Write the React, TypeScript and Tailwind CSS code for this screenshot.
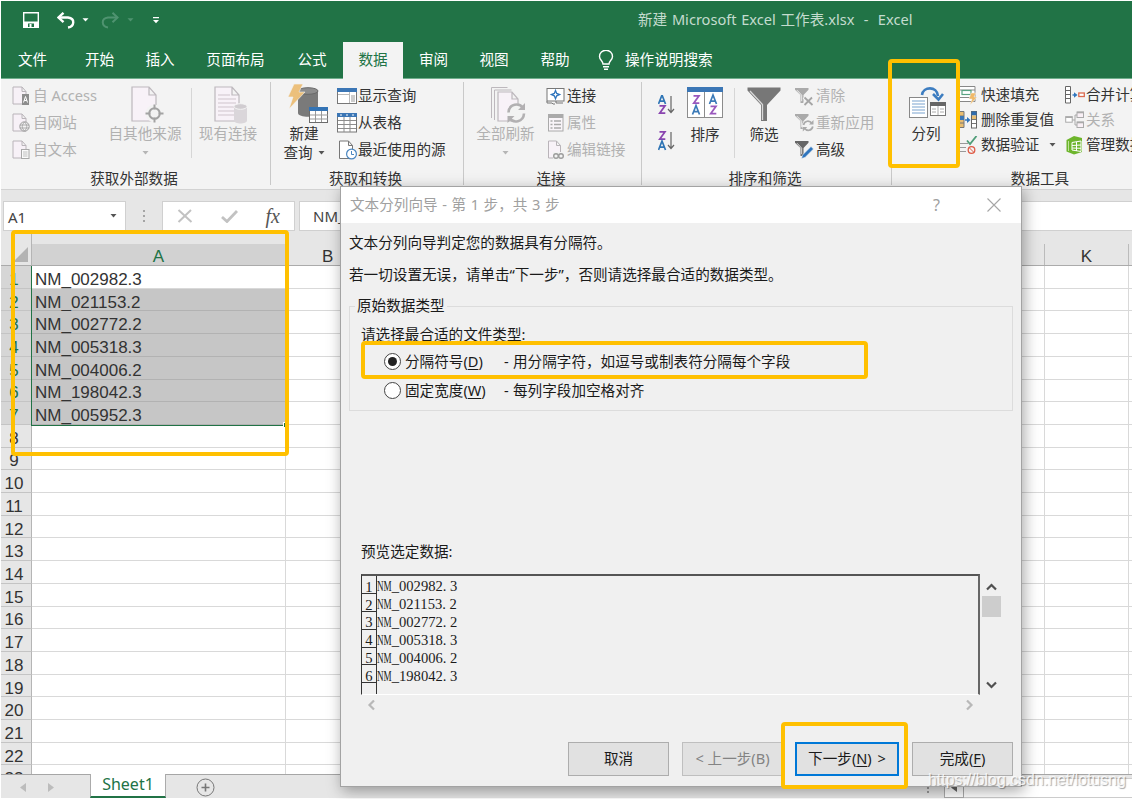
import React from "react";

const UI = "font-['Noto_Sans','Noto_Sans_CJK_SC',sans-serif]";

type IconProps = { dim?: boolean };

/* ---------- ribbon icons ---------- */

const PagePath = () => (
  <path d="M1 1h9l4 4.500v12.500h-13zM10 1v4.500h4" fill="#f7f1f7" stroke="#b9b4b9" />
);

const AccessIcon = () => (
  <svg width="18" height="20" viewBox="0 0 18 20" fill="none">
    <PagePath />
    <rect x="10" y="8" width="7" height="11" fill="#8d8d8d" />
    <path d="M11.500 16.500l2-6 2 6M12.200 14.500h2.600" stroke="#fff" />
  </svg>
);
const WebIcon = () => (
  <svg width="18" height="20" viewBox="0 0 18 20" fill="none">
    <PagePath />
    <circle cx="12.500" cy="13.500" r="4.700" fill="#f3f3f3" stroke="#9a9a9a" />
    <path d="M8 12h9M8 15h9M12.500 9c-3 3-3 6 0 9M12.500 9c3 3 3 6 0 9" stroke="#9a9a9a" strokeWidth=".8" />
  </svg>
);
const TextFileIcon = () => (
  <svg width="18" height="20" viewBox="0 0 18 20" fill="none">
    <PagePath />
    <rect x="9.500" y="9.500" width="7.500" height="9" fill="#fafafa" stroke="#a8a8a8" />
    <path d="M11 12h4.500M11 14h4.500M11 16h4.500" stroke="#b0b0b0" strokeWidth=".8" />
  </svg>
);
const OtherSourceIcon = () => (
  <svg width="34" height="38" viewBox="0 0 34 38" fill="none">
    <path d="M1 1h17l7 8v26H1zM18 1v8h7" fill="#f8f2f8" stroke="#bdb8bd" strokeWidth="1.200" />
    <circle cx="23.500" cy="27.500" r="9" fill="#f3f3f3" />
    <circle cx="23.500" cy="27.500" r="5.300" stroke="#a3a3a3" strokeWidth="2" />
    <path d="M23.500 18.500v5M23.500 31.500v5M14.500 27.500h5M27.500 27.500h5" stroke="#a3a3a3" strokeWidth="2" />
  </svg>
);
const ExistingIcon = () => (
  <svg width="34" height="38" viewBox="0 0 34 38" fill="none">
    <path d="M1 1h17l7 8v26H1zM18 1v8h7" fill="#f8f2f8" stroke="#bdb8bd" strokeWidth="1.200" />
    <path d="M4 9h12M4 13h18M4 17h18M4 21h18M4 25h16M4 29h16" stroke="#cfc4cc" />
    <path d="M20 20.500v14c0 4 13 4 13 0v-14" fill="#dad6da" />
    <ellipse cx="26.500" cy="20.500" rx="6.500" ry="2.800" fill="#d0ccd0" stroke="#f3f3f3" />
  </svg>
);
const NewQueryIcon = () => (
  <svg width="42" height="42" viewBox="0 0 42 42" fill="none">
    <path d="M10 8v22c0 5 20 5 20 0V8" fill="#7a7a7a" />
    <ellipse cx="20" cy="8" rx="10" ry="3.300" fill="#8d8d8d" stroke="#6a6a6a" />
    <path d="M6 1h9l-4 8h6L1 26l4-12H0z" fill="#ecc07c" stroke="#f3f3f3" strokeWidth=".6" />
    <rect x="21.500" y="24.500" width="18" height="15" fill="#fff" stroke="#6b6b6b" />
    <rect x="21" y="24" width="19" height="4" fill="#3474b5" />
    <path d="M22 32h18M22 36h18M27.500 28v11M33.500 28v11" stroke="#999" />
  </svg>
);
const ShowQueryIcon = () => (
  <svg width="20" height="18" viewBox="0 0 20 18" fill="none">
    <rect x=".5" y="1.500" width="19" height="15" fill="#fff" stroke="#777" />
    <rect width="20" height="4" y="1" fill="#3b76b5" />
    <path d="M1 7.500h11M12.500 5v11" stroke="#bbb" />
    <rect x="14" y="8" width="4" height="7" fill="#ccc" />
  </svg>
);
const FromTableIcon = () => (
  <svg width="20" height="20" viewBox="0 0 20 20" fill="none">
    <rect x=".5" y=".5" width="19" height="18.500" fill="#fff" stroke="#777" />
    <rect width="20" height="4" fill="#3b76b5" />
    <path d="M3 2h2M9 2h2M15 2h2" stroke="#fff" />
    <path d="M1 7.500h18M1 11.500h18M1 15.500h18M7 4v15M13 4v15" stroke="#8d8d8d" />
  </svg>
);
const RecentIcon = () => (
  <svg width="20" height="20" viewBox="0 0 20 20" fill="none">
    <path d="M2.500 1h9l4 4.500v13h-13zM11.500 1v4.500h4" fill="#fff" stroke="#777" />
    <circle cx="14.500" cy="14" r="4.900" fill="#fff" stroke="#4a86c0" strokeWidth="1.200" />
    <path d="M14.500 11v3.500h2.500" stroke="#4a86c0" />
  </svg>
);
const RefreshArrows = () => (
  <>
    <path d="M18.500 26.500c.5-9 11-10 14.500-4.500M34 27.500c-.5 9-11 10-14.500 4.500" stroke="#b2b0b2" strokeWidth="2.600" />
    <path d="M35 17v7h-7zM17.500 37v-7h7z" fill="#b2b0b2" />
  </>
);
const RefreshAllIcon = () => (
  <svg width="37" height="39" viewBox="0 0 37 39" fill="none">
    <path d="M1.500 32V1.500h16M4.500 34V4h17" stroke="#bdb8bd" />
    <path d="M8 6h14l6 7v22H8zM22 6v7h6" fill="#f8f2f8" stroke="#bdb8bd" strokeWidth="1.200" />
    <circle cx="26.500" cy="27" r="9.500" fill="#f3f3f3" />
    <RefreshArrows />
  </svg>
);
const ConnectIcon = () => (
  <svg width="19" height="18" viewBox="0 0 19 18" fill="none">
    <rect x="1" y="1.500" width="17" height="12.500" fill="#fff" stroke="#777" />
    <path d="M1 14v2h5l1 1h2M10 14v2h7" stroke="#777" />
    <path d="M9.500 3.500l1.200 2.900 2.900 1.200-2.900 1.200-1.200 2.900-1.200-2.900-2.900-1.200 2.900-1.200z" fill="#fff" stroke="#2f75bd" strokeWidth="1.300" />
  </svg>
);
const PropsIcon = () => (
  <svg width="19" height="18" viewBox="0 0 19 18" fill="none">
    <rect x="2.500" y=".5" width="14.500" height="16.500" fill="#f9f5f9" stroke="#aaa" />
    <rect x="2.500" y=".5" width="14.500" height="3.500" fill="#aaa" />
    <path d="M4.500 7h2M4.500 10.500h2M4.500 14h2M8 7h7M8 10.500h7M8 14h7" stroke="#aaa" strokeWidth="1.300" />
  </svg>
);
const EditLinkIcon = () => (
  <svg width="19" height="20" viewBox="0 0 19 20" fill="none">
    <path d="M2.500 1h8l4 4.500v12.500h-12zM10.500 1v4.500h4" fill="#f8f2f8" stroke="#b9b4b9" />
    <rect x="7" y="12" width="12" height="8" fill="#f3f3f3" />
    <circle cx="10" cy="16" r="2.300" stroke="#9d9d9d" strokeWidth="1.400" />
    <circle cx="15" cy="16" r="2.300" stroke="#9d9d9d" strokeWidth="1.400" />
  </svg>
);
const LetterA = ({ x, y, c }: { x: number; y: number; c: string }) => (
  <path transform={`translate(${x} ${y})`} d="M0 9L3.500 0 7 9M1.200 6.200h4.600" stroke={c} strokeWidth="1.700" />
);
const LetterZ = ({ x, y, c }: { x: number; y: number; c: string }) => (
  <path transform={`translate(${x} ${y})`} d="M.5.800h5.500L.7 8.200h5.600" stroke={c} strokeWidth="1.700" />
);
const SortIcon = ({ desc }: { desc?: boolean }) => (
  <svg width="17" height="20" viewBox="0 0 17 20" fill="none">
    {desc ? (
      <>
        <LetterZ x={1} y={0} c="#8a45b0" />
        <LetterA x={0.5} y={10} c="#2f75b5" />
      </>
    ) : (
      <>
        <LetterA x={0.5} y={0} c="#2f75b5" />
        <LetterZ x={1} y={10} c="#8a45b0" />
      </>
    )}
    <path d="M13 1v16.500M10 14l3 3.500 3-3.500" stroke="#666" strokeWidth="1.200" />
  </svg>
);
const SortDialogIcon = () => (
  <svg width="36" height="32" viewBox="0 0 36 32" fill="none">
    <rect x=".5" y=".5" width="35" height="30" fill="#fff" stroke="#8c8c8c" />
    <rect width="36" height="5" fill="#3b76b5" />
    <path d="M17.500 5v26" stroke="#8c8c8c" />
    <LetterZ x={6} y={8} c="#9a58bd" />
    <LetterA x={5.5} y={18.5} c="#3b7ab8" />
    <LetterA x={22.5} y={8} c="#3b7ab8" />
    <LetterZ x={23} y={18.5} c="#9a58bd" />
  </svg>
);
const FilterIcon = () => (
  <svg width="34" height="36" viewBox="0 0 34 36" fill="none">
    <path d="M.5.500h33v3L20 18v16h-6V18L.5 3.500z" fill="#777" />
    <path d="M3 4l12.500 13.500V33" stroke="#d8d8d8" strokeWidth="1.300" />
  </svg>
);
const SmallFunnel = ({ c }: { c: string }) => (
  <>
    <path d="M0 1h13.500v1.800L8.500 8v8H5.500V8L0 2.800z" fill={c} />
    <path d="M2 3.200l4.700 5v6" stroke="#fff" strokeWidth=".8" />
  </>
);
const ClearIcon = () => (
  <svg width="19" height="19" viewBox="0 0 19 19" fill="none">
    <SmallFunnel c="#aaa" />
    <path d="M9 10l9 8M17.500 10L9 18" stroke="#f3f3f3" strokeWidth="4" />
    <path d="M9.500 10.500l8 7.500M17 10.500L9.500 18" stroke="#a5a5a5" strokeWidth="1.800" />
  </svg>
);
const ReapplyIcon = () => (
  <svg width="19" height="19" viewBox="0 0 19 19" fill="none">
    <SmallFunnel c="#aaa" />
    <circle cx="13" cy="12.800" r="6" fill="#f3f3f3" />
    <path d="M8.500 12c1-4.500 6-5 8.500-1.500M17.800 13.500c-1 4.500-6 5-8.500 1.500" stroke="#aaa" strokeWidth="1.700" />
    <path d="M18.500 7v4.500H14zM7.800 18.500V14h4.500z" fill="#aaa" />
  </svg>
);
const AdvancedIcon = () => (
  <svg width="19" height="19" viewBox="0 0 19 19" fill="none">
    <SmallFunnel c="#666" />
    <path d="M6.500 18.500l1-3.500L16 6.500l2.500 2.500-8.500 8.500z" fill="#2f75bd" stroke="#f3f3f3" strokeWidth=".6" />
  </svg>
);
const SplitIcon = () => (
  <svg width="38" height="33" viewBox="0 0 38 33" fill="none">
    <rect x=".5" y="11.500" width="18" height="20" fill="#fff" stroke="#888" />
    <path d="M3 15h13M3 18h13M3 21h13M3 24h13M3 27h13" stroke="#7aa4d0" strokeWidth="1.200" />
    <rect x="21.500" y="16.500" width="15" height="13" fill="#fff" stroke="#777" />
    <rect x="21" y="16" width="16" height="4" fill="#666" />
    <path d="M29 20v9M23 23h4M23 26h4M31 23h4M31 26h4" stroke="#aaa" />
    <path d="M13 9C14 .5 28-.5 29 10" stroke="#3d7dc0" strokeWidth="2.600" />
    <path d="M24 8l5.500 5.500L34 8" stroke="#3d7dc0" strokeWidth="2.600" />
  </svg>
);
const FlashFillIcon = () => (
  <svg width="18" height="20" viewBox="0 0 18 20" fill="none">
    <path d="M-1 1.500h16v15H-1zM-1 5h16M-1 12.500h16" stroke="#888" fill="#fff" />
    <rect x="2" y="5.500" width="9" height="4" fill="#fff" stroke="#5aa382" strokeWidth="1.200" />
    <path d="M11 8h5l-2 4h3l-7 8 2-6H9z" fill="#f0ba68" stroke="#f3f3f3" strokeWidth=".5" />
  </svg>
);
const DedupeIcon = () => (
  <svg width="18" height="18" viewBox="0 0 18 18" fill="none">
    <path d="M-2 .5h6v16h-6M-2 5h6M-2 12h6" stroke="#777" fill="#e9bd70" />
    <rect x="-2" y="5" width="6" height="4" fill="#3b76b5" />
    <path d="M5 9h4" stroke="#2f75bd" strokeWidth="1.500" />
    <path d="M7 6l3.500 3L7 12z" fill="#2f75bd" />
    <rect x="11.500" y=".5" width="5" height="16.500" fill="#fff" stroke="#666" />
    <rect x="11.500" y=".5" width="5" height="4" fill="#2f6cad" />
    <rect x="12" y="4.500" width="4" height="4" fill="#e9bd70" />
    <path d="M12 8.500h4M12 12.500h4" stroke="#777" />
  </svg>
);
const ValidateIcon = () => (
  <svg width="18" height="18" viewBox="0 0 18 18" fill="none">
    <path d="M0 7.500h8M0 11.500h6M0 15.500h6" stroke="#999" />
    <path d="M7 4.500l3 3.500L16.500 0" stroke="#4f9d78" strokeWidth="1.800" />
    <circle cx="11.500" cy="14" r="3.300" stroke="#df5a45" strokeWidth="1.300" />
    <path d="M9.300 11.800l4.500 4.500" stroke="#df5a45" />
  </svg>
);
const ConsolidateIcon = () => (
  <svg width="20" height="18" viewBox="0 0 20 18" fill="none">
    <path d="M.5.500h5v16.500h-5zM1 4.500h5M1 8.500h5M1 12.500h5" stroke="#666" fill="#fff" />
    <path d="M7.500 9H10" stroke="#2f75bd" strokeWidth="1.400" />
    <path d="M9 6.200L12.500 9 9 11.800z" fill="#2f75bd" />
    <rect x="13.800" y="7" width="5.500" height="3.500" fill="#fff" stroke="#db6a4e" strokeWidth="1.300" />
  </svg>
);
const RelationIcon = () => (
  <svg width="20" height="18" viewBox="0 0 20 18" fill="none">
    <path d="M7 9h3V4h2M10 9v5h2" stroke="#aaa" />
    <rect x=".7" y="5.700" width="6.500" height="5.500" fill="#fff" stroke="#aaa" />
    <path d="M.5 6.200h7" stroke="#aaa" strokeWidth="1.600" />
    <rect x="12" y="1" width="6.500" height="5.500" fill="#f9f0f6" stroke="#aaa" />
    <path d="M12 1.500h7" stroke="#aaa" strokeWidth="1.600" />
    <rect x="12" y="11" width="6.500" height="5.500" fill="#f9f0f6" stroke="#aaa" />
    <path d="M12 11.500h7" stroke="#aaa" strokeWidth="1.600" />
  </svg>
);
const ModelIcon = () => (
  <svg width="20" height="20" viewBox="0 0 20 20" fill="none">
    <path d="M1.500 5L9 1l8 2v14l-8 2.500-7.500-3z" fill="#6db52c" />
    <path d="M7 7.500l9-1.500v10.500L7 15z" stroke="#fff" />
    <path d="M7 10.500l9-.5M7 13l9 .3M11.500 7v9" stroke="#fff" />
    <path d="M3.500 6v10" stroke="#bfe09b" />
  </svg>
);

/* ---------- ribbon building blocks ---------- */

const Caret = ({ dim }: IconProps) => (
  <svg width="7" height="4" viewBox="0 0 7 4">
    <path d="M.5 0h6l-3 3.500z" fill={dim ? "#b5b5b5" : "#555"} />
  </svg>
);

function Small({ icon, label, dim, caret }: { icon: React.ReactNode; label: string; dim?: boolean; caret?: boolean }) {
  return (
    <div className={`flex h-full items-center whitespace-nowrap ${dim ? "text-[#b1b1b1]" : "text-[#333]"}`}>
      <span className="flex w-[21px] shrink-0 items-center">{icon}</span>
      <span>{label}</span>
      {caret && <span className="ml-[10px]"><Caret /></span>}
    </div>
  );
}

function Big({ icon, label, second, dim, width, caret }: {
  icon: React.ReactNode; label: string; second?: string; dim?: boolean; width: string; caret?: boolean;
}) {
  return (
    <div className={`flex ${width} shrink-0 flex-col items-center whitespace-nowrap leading-[19px] ${dim ? "text-[#b1b1b1]" : "text-[#333]"}`}>
      <div className="flex h-[38px] items-start justify-center">{icon}</div>
      <div>{label}</div>
      {second && <div className="flex items-center gap-[5px]">{second}<Caret /></div>}
      {caret && <div className="mt-[8px]"><Caret dim /></div>}
    </div>
  );
}

function Group({ label, width, children }: { label: string; width: string; children: React.ReactNode }) {
  return (
    <section className={`flex ${width} shrink-0 flex-col`}>
      <div className="flex h-[88px] pt-[4px]">{children}</div>
      <div className="flex h-[22px] items-center justify-center pr-[3px] pt-[2px] text-[#333]">{label}</div>
    </section>
  );
}

const Divider = () => <div className="mt-[3px] h-[103px] w-px shrink-0 bg-[#c9c9c9]" />;
const Rule = () => <div className="mt-[5px] h-[70px] w-px shrink-0 bg-[#d6d6d6]" />;

function Ribbon() {
  return (
    <div className="flex h-[112px] shrink-0 overflow-hidden border-b border-[#d2d2d2] border-t border-t-[#6fae8c] bg-[#f3f3f3] text-[14.600px]">
      <Group label="获取外部数据" width="w-[269px]">
        <div className="grid h-[80px] w-[98px] grid-rows-3 pl-[11px]">
          <Small dim icon={<AccessIcon />} label="自 Access" />
          <Small dim icon={<WebIcon />} label="自网站" />
          <Small dim icon={<TextFileIcon />} label="自文本" />
        </div>
        <div className="flex pt-[3px]">
          <Big dim width="w-[92px]" caret icon={<span className="pl-[6px]"><OtherSourceIcon /></span>} label="自其他来源" />
        </div>
        <Rule />
        <div className="flex pt-[3px]">
          <Big dim width="w-[72px]" icon={<span className="pl-[6px]"><ExistingIcon /></span>} label="现有连接" />
        </div>
      </Group>
      <Divider />
      <Group label="获取和转换" width="w-[192px]">
        <div className="pt-[3px]">
          <Big width="w-[66px]" icon={<span className="-mt-[3px] ml-[4px] pl-[6px]"><NewQueryIcon /></span>} label="新建" second="查询" />
        </div>
        <div className="grid h-[80px] grid-rows-3">
          <Small icon={<ShowQueryIcon />} label="显示查询" />
          <Small icon={<FromTableIcon />} label="从表格" />
          <Small icon={<RecentIcon />} label="最近使用的源" />
        </div>
      </Group>
      <Divider />
      <Group label="连接" width="w-[177px]">
        <div className="pl-px pt-[3px]">
          <Big dim width="w-[81px]" caret icon={<span className="pl-[5px]"><RefreshAllIcon /></span>} label="全部刷新" />
        </div>
        <div className="grid h-[80px] grid-rows-3">
          <Small icon={<ConnectIcon />} label="连接" />
          <Small dim icon={<PropsIcon />} label="属性" />
          <Small dim icon={<EditLinkIcon />} label="编辑链接" />
        </div>
      </Group>
      <Divider />
      <Group label="排序和筛选" width="w-[249px]">
        <div className="flex w-[39px] flex-col gap-[16px] pl-[16px] pt-[12px]">
          <SortIcon />
          <SortIcon desc />
        </div>
        <div className="pt-[4px]">
          <Big width="w-[48px]" icon={<SortDialogIcon />} label="排序" />
        </div>
        <div className="w-[5px]" />
        <Rule />
        <div className="pt-[4px]">
          <Big width="w-[58px]" icon={<FilterIcon />} label="筛选" />
        </div>
        <div className="grid h-[80px] grid-rows-3 pl-[2px]">
          <Small dim icon={<ClearIcon />} label="清除" />
          <Small dim icon={<ReapplyIcon />} label="重新应用" />
          <Small icon={<AdvancedIcon />} label="高级" />
        </div>
      </Group>
      <Divider />
      <Group label="数据工具" width="w-[299px]">
        <div className="pt-[3px]">
          <Big width="w-[68px]" icon={<span className="pl-[3px]"><SplitIcon /></span>} label="分列" />
        </div>
        <div className="-mt-px grid h-[76px] w-[105px] grid-rows-3">
          <Small icon={<FlashFillIcon />} label="快速填充" />
          <Small icon={<DedupeIcon />} label="删除重复值" />
          <Small caret icon={<ValidateIcon />} label="数据验证" />
        </div>
        <div className="-mt-px grid h-[76px] grid-rows-3">
          <Small icon={<ConsolidateIcon />} label="合并计算" />
          <Small dim icon={<RelationIcon />} label="关系" />
          <Small icon={<ModelIcon />} label="管理数据模型" />
        </div>
      </Group>
    </div>
  );
}

/* ---------- title bar and tabs ---------- */

function TitleBar() {
  return (
    <div className="flex h-[41px] shrink-0 items-center bg-[#217346] pb-[3px] text-[14.600px] text-[#c4dccf]">
      <div className="flex w-[637px] items-center pl-[22px]">
        <svg width="16" height="16" viewBox="0 0 16 16" fill="none">
          <path d="M.7.700h14.600v14.600H2.500L.7 13.500z" stroke="#fff" strokeWidth="1.400" />
          <path d="M0 9.500h16V16H0z" fill="#fff" />
          <path d="M5 11.500h6V15H5z" fill="#217346" />
          <path d="M6.500 12h2v3h-2z" fill="#fff" />
        </svg>
        <svg className="ml-[18px]" width="18" height="17" viewBox="0 0 18 17" fill="none">
          <path d="M1.500 5.500h9.500c7.500 1 6.500 9 0 10" stroke="#fff" strokeWidth="2.400" />
          <path d="M6.500.800L1.500 5.500l5 4.700" stroke="#fff" strokeWidth="2.400" />
        </svg>
        <svg className="ml-[7px]" width="7" height="4" viewBox="0 0 7 4"><path d="M.5.300h6l-3 3.200z" fill="#fff" /></svg>
        <svg className="ml-[12px]" width="18" height="17" viewBox="0 0 18 17" fill="none">
          <path d="M16.500 5.500H7C-.5 6.500.5 14.500 7 15.500" stroke="#4f9370" strokeWidth="2" />
          <path d="M11.500.800l5 4.700-5 4.700" stroke="#4f9370" strokeWidth="2" />
        </svg>
        <svg className="ml-[8px]" width="7" height="4" viewBox="0 0 7 4"><path d="M.5.300h6l-3 3.200z" fill="#4f9370" /></svg>
        <svg className="ml-[18px]" width="8" height="7" viewBox="0 0 8 7"><path d="M1 0h6v1.200H1zM1 3h6L4 6.200z" fill="#fff" /></svg>
      </div>
      <div className="whitespace-pre [word-spacing:0.900px]">新建 Microsoft Excel 工作表.xlsx  -  Excel</div>
    </div>
  );
}

const TABS = [
  { t: "文件", w: "w-[68px]" },
  { t: "开始", w: "w-[61px]" },
  { t: "插入", w: "w-[60px]" },
  { t: "页面布局", w: "w-[91px]" },
  { t: "公式", w: "w-[62px]" },
  { t: "数据", w: "w-[60px]", on: true },
  { t: "审阅", w: "w-[61px]" },
  { t: "视图", w: "w-[60px]" },
  { t: "帮助", w: "w-[62px]" },
];

function Tabs() {
  return (
    <div className="flex h-[36px] shrink-0 bg-[#217346] text-[14.600px] text-white">
      {TABS.map((tab, i) => (
        <div
          key={tab.t}
          className={`flex ${tab.w} items-center justify-center ${tab.on ? "relative z-10 h-[37px] bg-[#f3f3f3] pb-[2px] text-[#217346]" : ""} ${i === 0 ? "pr-[5px]" : ""}`}
        >
          {tab.t}
        </div>
      ))}
      <div className="flex items-center pl-[12px]">
        <svg width="16" height="21" viewBox="0 0 16 21" fill="none" stroke="#fff" strokeWidth="1.400">
          <path d="M5 14c0-3-3.500-4-3.500-7.500a6.500 6.300 0 0 1 13 0C14.500 10 11 11 11 14zM5 16.800h6M6 19.300h4" />
        </svg>
        <span className="pl-[11px]">操作说明搜索</span>
      </div>
    </div>
  );
}

/* ---------- sheet ---------- */

const CELLS = ["NM_002982.3", "NM_021153.2", "NM_002772.2", "NM_005318.3", "NM_004006.2", "NM_198042.3", "NM_005952.3"];
const ROWS = Array.from({ length: 23 }, (_, i) => i + 1);
const COLS = [
  { id: 2, name: "B" },
  { id: 3 }, { id: 4 }, { id: 5 }, { id: 6 }, { id: 7 }, { id: 8 }, { id: 9 }, { id: 10 },
  { id: 11, name: "K" },
  { id: 12 },
];

function FormulaBar() {
  return (
    <div className="flex h-[42px] shrink-0 bg-[#e6e6e6] pb-px pl-[2px] pt-[11px] text-[16px] text-[#444]">
      <div className="flex w-[123px] items-center justify-between border border-[#d0d0d0] bg-white pl-[4px] pr-[8px]">
        <span className="pt-[2px] text-[15px]">A1</span>
        <Caret />
      </div>
      <div className="flex w-[36px] items-center justify-center">
        <svg width="3" height="14" viewBox="0 0 3 14"><path d="M0 1h2v2H0zM0 6h2v2H0zM0 11h2v2H0z" fill="#a5a5a5" /></svg>
      </div>
      <div className="flex w-[133px] items-center justify-between border border-[#d0d0d0] bg-white pl-[14px] pr-[14px]">
        <svg width="16" height="14" viewBox="0 0 16 14" fill="none"><path d="M1.500 1l13 12M14 1L1.500 13" stroke="#c2c2c2" strokeWidth="2" /></svg>
        <svg width="17" height="13" viewBox="0 0 17 13" fill="none"><path d="M1 7l5 4.500L16 1" stroke="#c2c2c2" strokeWidth="2.800" /></svg>
        <span className="font-['Liberation_Serif',serif] text-[20px] italic leading-none text-[#555]">fx</span>
      </div>
      <div className="ml-[4px] flex flex-1 items-center border-y border-l border-[#d0d0d0] bg-white pl-[13px] text-[15px]">
        <span className="pt-px">NM_002982.3</span>
      </div>
    </div>
  );
}

function Sheet() {
  return (
    <div className="flex min-h-0 flex-1 flex-col overflow-hidden font-['Liberation_Sans',sans-serif] text-[17px] text-[#333]">
      <div className="flex h-[34px] shrink-0 border-b border-[#ababab] bg-[#e6e6e6]">
        <div className="flex w-[31px] shrink-0 items-end justify-end border-r border-[#b5b5b5] pb-[3px] pr-[3px]">
          <svg width="15" height="15" viewBox="0 0 15 15"><path d="M15 0v15H0z" fill="#b3b3b3" /></svg>
        </div>
        <div className="mt-[12px] flex w-[254px] shrink-0 items-center justify-center border-r border-[#bbb] bg-[#d2d2d2] pt-[4px] text-[#217346]">A</div>
        {COLS.map((c) => (
          <div key={c.id} className="mt-[12px] flex w-[84.300px] shrink-0 items-center justify-center border-r border-[#bbb] pt-[4px]">{c.name}</div>
        ))}
      </div>
      <div className="relative min-h-0 flex-1 overflow-hidden bg-white">
        {ROWS.map((r) => {
          const sel = r <= 7;
          return (
            <div key={r} className="flex h-[22.710px]">
              <div className={`flex w-[31px] shrink-0 items-center justify-center border-b border-r border-b-[#c4c4c4] border-r-[#b5b5b5] pr-[4px] pt-[6px] leading-[16px] ${sel ? "bg-[#d6d6d6] text-[#217346]" : "bg-[#e6e6e6]"}`}>{r}</div>
              <div className={`flex w-[254px] shrink-0 items-center border-b border-r pl-[3px] pt-[6px] leading-[16px] ${sel && r > 1 ? "border-b-[#b2b2b2] border-r-[#b2b2b2] bg-[#c6c6c6]" : "border-[#d9d9d9]"}`}>
                {CELLS[r - 1] ?? ""}
              </div>
              {COLS.map((c) => (
                <div key={c.id} className="w-[84.300px] shrink-0 border-b border-r border-[#d9d9d9]" />
              ))}
            </div>
          );
        })}
        <div className="absolute left-[30px] top-[-1px] h-[161px] w-[256px] border-[1.500px] border-[#217346]" />
        <div className="absolute left-[282px] top-[156px] h-[6px] w-[6px] border border-white bg-[#217346]" />
      </div>
    </div>
  );
}

function SheetBar() {
  return (
    <div className="flex h-[24px] shrink-0 border-t border-[#a6a6a6] bg-[#e6e6e6]">
      <div className="flex w-[89px] items-center gap-[22px] pl-[19px] pt-px">
        <svg width="6" height="9" viewBox="0 0 6 9"><path d="M6 0v9L0 4.500z" fill="#bcbcbc" /></svg>
        <svg width="6" height="9" viewBox="0 0 6 9"><path d="M0 0v9l6-4.500z" fill="#bcbcbc" /></svg>
      </div>
      <div className="-mt-px flex w-[76px] items-center justify-center border-x border-b-2 border-x-[#ababab] border-b-[#217346] bg-white pb-[2px] text-[16px] leading-none text-[#217346]">
        Sheet1
      </div>
      <div className="flex flex-1 items-center pl-[30px] pt-[2px]">
        <svg width="19" height="19" viewBox="0 0 19 19" fill="none" stroke="#777">
          <circle cx="9.500" cy="9.500" r="8.500" />
          <path d="M9.500 5.500v8M5.500 9.500h8" strokeWidth="1.600" />
        </svg>
      </div>
      <svg className="mr-[14px] mt-[8px]" width="3" height="12" viewBox="0 0 3 12"><path d="M0 0h2v2H0zM0 4h2v2H0zM0 8h2v2H0z" fill="#999" /></svg>
      <div className="flex w-[188px] items-center">
        <div className="mt-[2px] flex h-[20px] w-[20px] items-center justify-center border border-[#ababab] bg-white">
          <svg width="6" height="9" viewBox="0 0 6 9"><path d="M6 0v9L0 4.500z" fill="#666" /></svg>
        </div>
        <div className="mt-[2px] h-[20px] flex-1 border-y border-[#ccc] bg-white" />
      </div>
    </div>
  );
}

/* ---------- wizard dialog ---------- */

const Radio = ({ on }: { on?: boolean }) => (
  <span className="flex h-[17px] w-[17px] items-center justify-center rounded-full border border-[#444] bg-white">
    {on && <span className="h-[9px] w-[9px] rounded-full bg-[#222]" />}
  </span>
);

function Option({ on, label, k, desc }: { on?: boolean; label: string; k: string; desc: string }) {
  return (
    <div className="flex h-[29px] items-center">
      <Radio on={on} />
      <span className="w-[103px] pl-[4px]">{label}(<u className="underline-offset-2">{k}</u>)</span>
      <span className="w-[9px]">-</span>
      <span>{desc}</span>
    </div>
  );
}

function Chevron({ rotate, dim }: { rotate: string; dim?: boolean }) {
  return (
    <svg className={rotate} width="11" height="8" viewBox="0 0 11 8" fill="none">
      <path d="M1 6.500l4.500-4.500L10 6.500" stroke={dim ? "#b8b8b8" : "#505050"} strokeWidth="2.200" />
    </svg>
  );
}

function PreviewLine({ n, text }: { n: number; text: string }) {
  return (
    <div className="flex h-[17.900px]">
      <div className="flex w-[15px] items-center justify-center border-b border-r border-[#333] pt-[5px] leading-none">{n}</div>
      <div className="flex items-center whitespace-nowrap pt-[3px] leading-none">
        <span className="w-[14.700px]"><span className="inline-block origin-left scale-x-[0.620]">NM</span></span>
        <span>{text.slice(2, 9)}</span>
        <span className="w-[7.300px]">.</span>
        <span>{text.slice(10)}</span>
      </div>
    </div>
  );
}

const Button = ({ children, cls }: { children: React.ReactNode; cls: string }) => (
  <button className={`flex h-[34px] items-center justify-center whitespace-pre bg-[#e1e1e1] ${cls}`}>{children}</button>
);

function Wizard() {
  return (
    <div className="absolute left-[340px] top-[186px] flex h-[601px] w-[682px] flex-col border border-[#a3a3a3] bg-[#f0f0f0] text-[14.600px] text-[#1a1a1a] shadow-[2px_4px_14px_rgba(0,0,0,0.350)]">
      <div className="flex h-[36px] shrink-0 items-center bg-white pl-[9px] text-[#a0a0a0]">
        <span className="w-[583px] [word-spacing:0.800px]">文本分列向导 - 第 1 步，共 3 步</span>
        <span className="w-[54px] text-[16px]">?</span>
        <svg width="14" height="14" viewBox="0 0 14 14"><path d="M.5.500l13 13M13.500.500l-13 13" stroke="#a6a6a6" strokeWidth="1.100" /></svg>
      </div>
      <div className="flex flex-col pl-[8px] pr-[8px]">
        <p className="mt-[8px] h-[22px] leading-[22px]">文本分列向导判定您的数据具有分隔符。</p>
        <p className="mt-[10px] h-[22px] leading-[22px]">若一切设置无误，请单击“下一步”，否则请选择最合适的数据类型。</p>
        <div className="mt-[21px] h-[105px] border border-[#dcdcdc]">
          <div className="-mt-[13px] ml-[5px] h-[22px] w-[92px] bg-[#f0f0f0] pl-[2px] leading-[22px]">原始数据类型</div>
          <div className="mt-[7px] h-[22px] pl-[11px] leading-[22px]">请选择最合适的文件类型:</div>
          <div className="pl-[34px] pt-[2px]">
            <Option on label="分隔符号" k="D" desc="用分隔字符，如逗号或制表符分隔每个字段" />
            <Option label="固定宽度" k="W" desc="每列字段加空格对齐" />
          </div>
        </div>
        <div className="mt-[129px] h-[22px] pl-[12px] leading-[22px]">预览选定数据:</div>
        <div className="mt-[12px] flex pl-[12px]">
          <div className="flex h-[121px] w-[619px] flex-col overflow-hidden border-b border-l border-r-2 border-t-2 border-b-white border-l-[#333] border-r-[#666] border-t-[#555] font-['Liberation_Serif',serif] text-[14.600px]">
            {CELLS.slice(0, 6).map((c, i) => <PreviewLine key={c} n={i + 1} text={c} />)}
            <div className="w-[15px] flex-1 border-r border-[#333]" />
          </div>
          <div className="flex w-[22px] flex-col items-center pt-[9px]">
            <Chevron rotate="" />
            <div className="mt-[5px] h-[21px] w-[19px] bg-[#cdcdcd]" />
            <div className="mt-[64px]"><Chevron rotate="rotate-180" /></div>
          </div>
        </div>
        <div className="mt-[5px] flex h-[10px] w-[626px] items-center justify-between pl-[17px]">
          <Chevron dim rotate="-rotate-90" />
          <Chevron dim rotate="rotate-90" />
        </div>
        <div className="mt-[32px] flex justify-end">
          <Button cls="mr-[13px] w-[101px] border border-[#adadad]">取消</Button>
          <Button cls="mr-[12px] w-[101px] border border-[#bfbfbf] text-[#838383]">{"< 上一步(B)"}</Button>
          <Button cls="mr-[13px] w-[104px] border-2 border-[#0078d7] [word-spacing:2px]">下一步(<u className="underline-offset-2">N</u>){" >"}</Button>
          <Button cls="w-[101px] border border-[#adadad]">完成(<u className="underline-offset-2">F</u>)</Button>
        </div>
      </div>
    </div>
  );
}

const MARK = "pointer-events-none absolute rounded-[4px] border-4 border-[#ffc000]";

export default function App() {
  return (
    <div className={`relative h-[799px] w-[1133px] overflow-hidden bg-white pb-px pl-px pr-px pt-px ${UI}`}>
      <div className="flex h-full w-full flex-col overflow-hidden">
        <TitleBar />
        <Tabs />
        <Ribbon />
        <FormulaBar />
        <Sheet />
        <SheetBar />
      </div>
      <Wizard />
      <div className={`${MARK} left-[11px] top-[230px] h-[226px] w-[278px]`} />
      <div className={`${MARK} left-[888px] top-[59px] h-[109px] w-[72px]`} />
      <div className={`${MARK} left-[361px] top-[341px] h-[38px] w-[507px]`} />
      <div className={`${MARK} left-[781px] top-[722px] h-[67px] w-[127px]`} />
      <div className="absolute left-[928px] top-[769px] whitespace-nowrap font-['Liberation_Sans',sans-serif] text-[15.900px] leading-[22px] text-white/80 [text-shadow:1px_1px_1px_rgba(0,0,0,0.350)]">
        https://blog.csdn.net/lotusng
      </div>
    </div>
  );
}
